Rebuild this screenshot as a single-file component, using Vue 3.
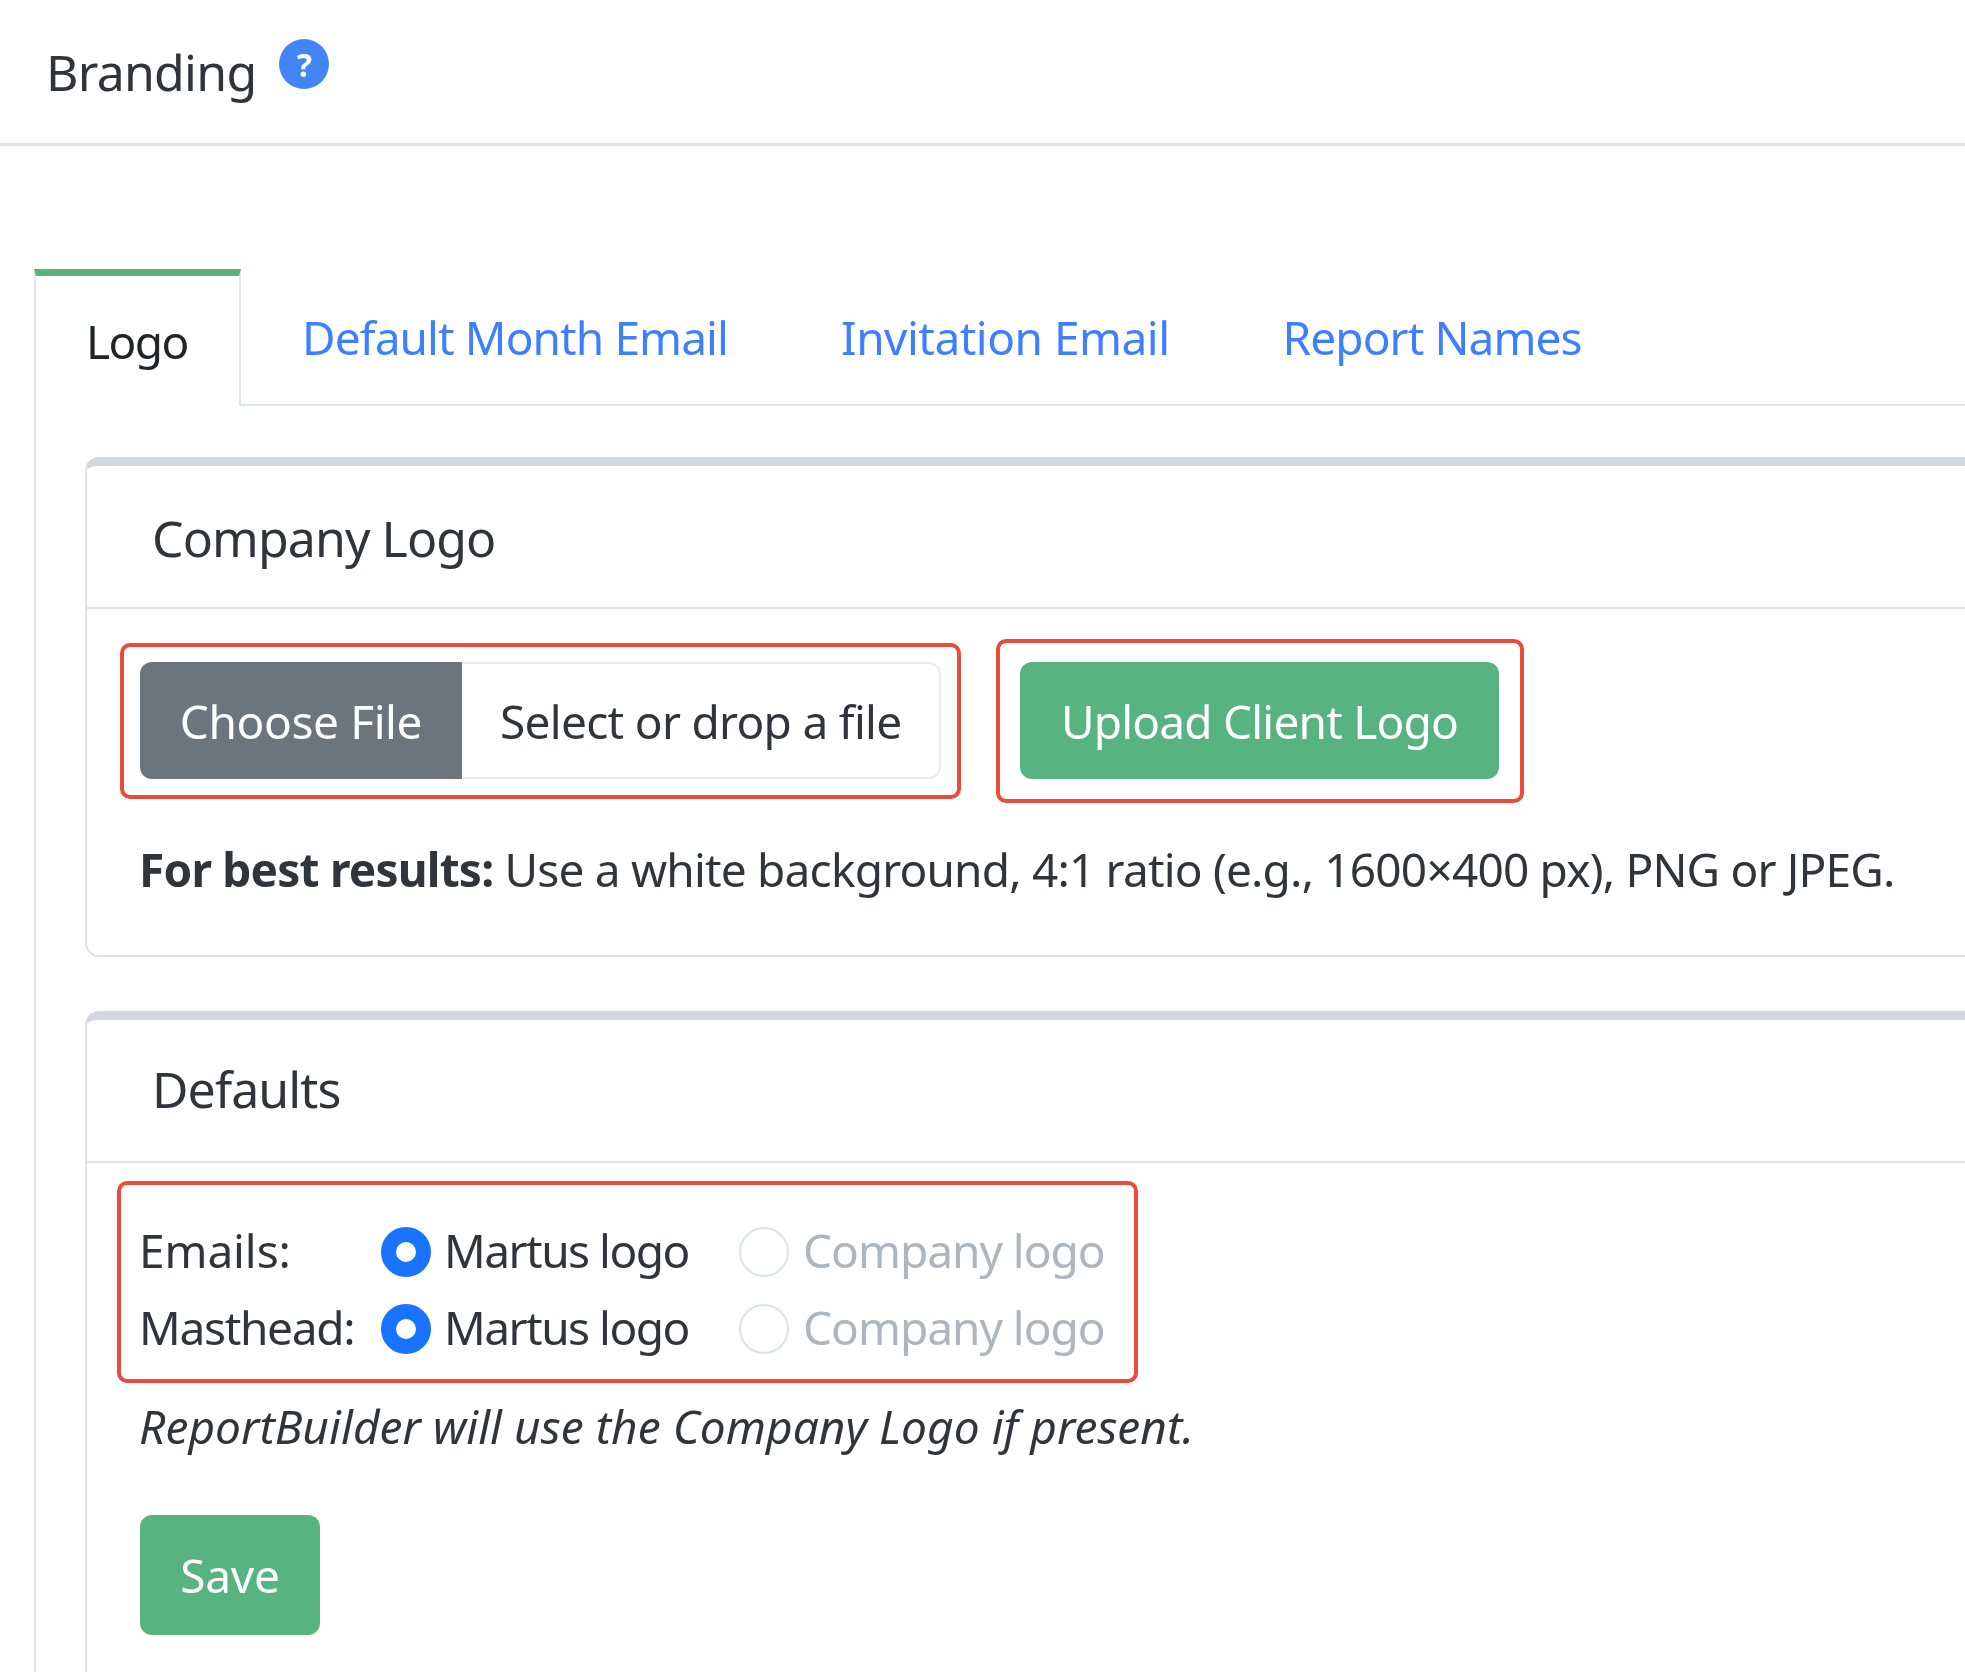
<script setup>
const tabs = ['Default Month Email', 'Invitation Email', 'Report Names']
const rows = ['Emails:', 'Masthead:']
</script>

<template>
  <div class="page">
    <header class="head">
      <h1 class="title">Branding</h1>
      <span class="help">?</span>
    </header>

    <nav class="tabs">
      <div class="tab active">Logo</div>
      <div class="rest">
        <a v-for="t in tabs" :key="t" class="tab link">{{ t }}</a>
      </div>
    </nav>

    <main class="pane">
      <section class="card one">
        <div class="card-head">Company Logo</div>
        <div class="body-one">
          <div class="uploads">
            <div class="mark mark-file">
              <div class="file">
                <span class="choose">Choose File</span>
                <span class="drop">Select or drop a file</span>
              </div>
            </div>
            <div class="mark mark-upload">
              <button class="btn upload">Upload Client Logo</button>
            </div>
          </div>
          <p class="hint"><b>For best results:</b> Use a white background, 4:1 ratio (e.g., 1600×400 px), PNG or JPEG.</p>
        </div>
      </section>

      <section class="card two">
        <div class="card-head head-two">Defaults</div>
        <div class="body-two">
          <div class="mark mark-radios">
            <div v-for="r in rows" :key="r" class="row">
              <span class="lab">{{ r }}</span>
              <span class="radio on"></span>
              <span class="opt">Martus logo</span>
              <span class="radio off"></span>
              <span class="opt dim">Company logo</span>
            </div>
          </div>
          <p class="note">ReportBuilder will use the Company Logo if present.</p>
          <button class="btn save">Save</button>
        </div>
      </section>
    </main>
  </div>
</template>

<style>
html, body { margin: 0; background: #fff; overflow: hidden; }
</style>

<style scoped>
.page {
  width: 1965px;
  height: 1672px;
  overflow: hidden;
  font-family: "Noto Sans", sans-serif;
  font-size: 46px;
  letter-spacing: -0.8px;
  color: #2f353b;
  background: #fff;
  filter: blur(0.5px);
}
.head {
  height: 143px;
  border-bottom: 3px solid #e0e0e0;
  display: flex;
  padding-left: 46px;
}
.title {
  margin: 39px 0 0;
  font-size: 50px;
  font-weight: 400;
  line-height: 66px;
  letter-spacing: -0.75px;
}
.help {
  width: 50px;
  height: 50px;
  margin: 39px 0 0 23px;
  border-radius: 50%;
  background: #4285f4;
  color: #fff;
  font-size: 32px;
  font-weight: 700;
  letter-spacing: 0;
  display: flex;
  align-items: center;
  justify-content: center;
}
.tabs {
  display: flex;
  margin: 123px 0 0 34px;
  height: 137px;
}
.tab { white-space: nowrap; }
.active {
  width: 207px;
  box-sizing: border-box;
  border-top: 7px solid #57b37f;
  border-left: 2px solid #e3e6ee;
  border-right: 2px solid #e3e6ee;
  padding: 31px 0 0 50px;
  line-height: 68px;
  letter-spacing: -1.6px;
  color: #212529;
}
.rest {
  flex: 1;
  display: flex;
  border-bottom: 2px solid #e3e6ee;
  padding: 34px 0 0 61px;
  gap: 113px;
  line-height: 68px;
  letter-spacing: -0.9px;
}
.link { color: #3d7fff; }
.link:nth-child(2) { letter-spacing: -0.5px; }
.pane {
  margin-left: 34px;
  border-left: 2px solid #e3e6ee;
  padding: 51px 0 0 49px;
}
.card {
  width: 2200px;
  box-sizing: border-box;
  border: 2px solid #dfe1e5;
  border-top: 9px solid #d3d7e0;
  border-radius: 14px;
}
.one { height: 500px; }
.two { height: 800px; margin-top: 54px; border-bottom-left-radius: 0; }
.card-head {
  height: 143px;
  box-sizing: border-box;
  border-bottom: 2px solid #dfe1e5;
  padding: 42px 0 0 65px;
  font-size: 50px;
  line-height: 60px;
  letter-spacing: -0.9px;
}
.head-two { padding-top: 39px; }
.body-one { padding: 30px 0 0 33px; }
.uploads { display: flex; align-items: center; gap: 35px; }
.mark {
  box-sizing: border-box;
  border: 4px solid #e74c3c;
  border-radius: 10px;
}
.mark-file { width: 841px; height: 156px; padding: 15px 16px; }
.mark-upload { width: 528px; height: 164px; padding: 19px 20px; }
.file {
  display: flex;
  height: 117px;
  box-sizing: border-box;
  border: 2px solid #e9ecef;
  border-radius: 12px;
}
.choose {
  width: 322px;
  margin: -2px 0 -2px -2px;
  background: #6c757d;
  color: #fff;
  border-radius: 12px 0 0 12px;
  letter-spacing: -0.4px;
  display: flex;
  align-items: center;
  justify-content: center;
}
.drop {
  display: flex;
  align-items: center;
  padding-left: 38px;
  letter-spacing: -0.7px;
}
.btn {
  border: 0;
  font: inherit;
  color: #fff;
  background: #57b37f;
  border-radius: 12px;
  padding: 0;
}
.upload { width: 479px; height: 117px; letter-spacing: -0.8px; }
.hint { margin: 36px 0 0 19px; line-height: 60px; white-space: nowrap; }
.hint b { font-weight: 700; }
.body-two { padding: 18px 0 0 30px; }
.mark-radios { width: 1021px; height: 202px; padding: 28px 0 0 18px; }
.row { display: flex; align-items: center; height: 77px; }
.lab { width: 242px; padding-bottom: 4px; letter-spacing: -1.3px; }
.row:first-child .lab { letter-spacing: -0.1px; }
.radio {
  width: 50px;
  height: 50px;
  box-sizing: border-box;
  border-radius: 50%;
  flex: none;
}
.on { border: 15px solid #1a73ff; background: #fff; }
.off { border: 2px solid #dee2e6; background: #fff; }
.opt {
  margin-left: 13px;
  width: 295px;
  padding-bottom: 4px;
  white-space: nowrap;
  letter-spacing: -1.5px;
}
.dim { color: #adb5bd; margin-left: 14px; letter-spacing: -1px; }
.note { margin: 13px 0 0 22px; font-style: italic; line-height: 60px; letter-spacing: 0.05px; white-space: nowrap; }
.save { display: block; width: 180px; height: 120px; margin: 59px 0 0 23px; letter-spacing: -0.2px; }
</style>
